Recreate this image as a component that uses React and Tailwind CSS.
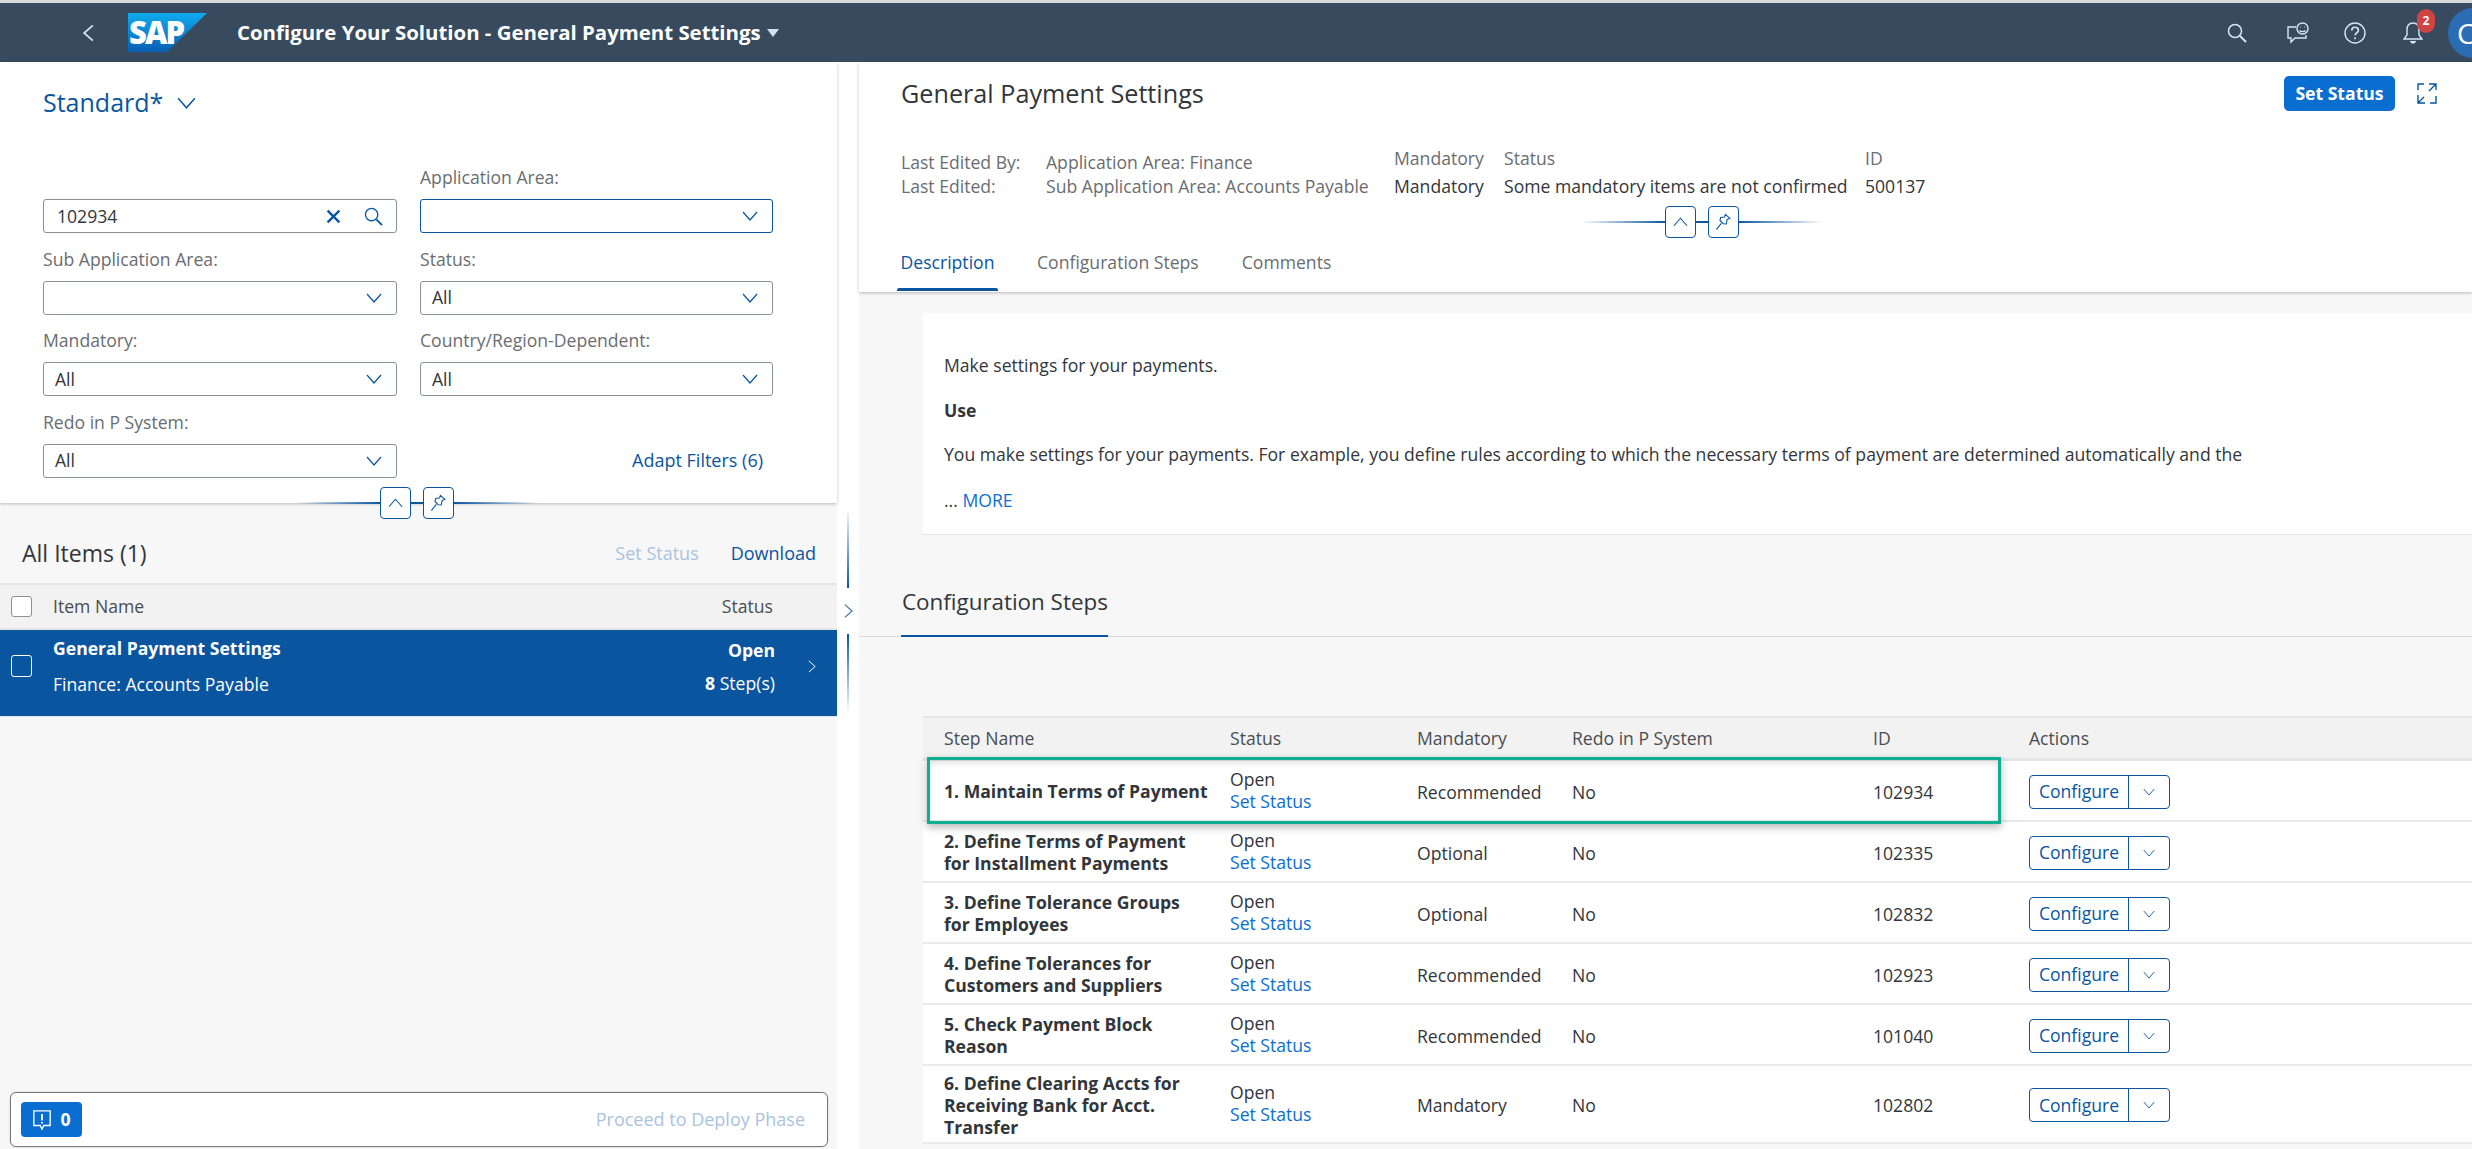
import React from "react";

const Chevron = ({ className = "", dir = "down", w = "1.2" }) => {
  const d = {
    down: "M1 1l7 8 7-8",
    up: "M1 9l7-8 7 8",
    right: "M1 1l8 7-8 7",
    left: "M9 1L1 8l8 7",
  }[dir];
  const vb = dir === "down" || dir === "up" ? "0 0 16 10" : "0 0 10 16";
  return (
    <svg viewBox={vb} fill="none" stroke="currentColor" strokeWidth={w} className={className}>
      <path d={d} />
    </svg>
  );
};

const Pin = () => (
  <svg viewBox="0 0 20 20" fill="none" stroke="#0a55a0" strokeWidth="1.2" className="w-[18px] h-[18px]">
    <path d="M11.5 1.5l5 4.5-3 1.2-1 5-3.4-.3-3.6-3.6.8-3.2 4.3-.6zM7 11.5l-5.5 7" />
  </svg>
);

const CollapsePins = () => (
  <div className="h-[32px] w-[242px] flex items-center justify-center gap-[12px] relative">
    <div className="absolute left-0 right-0 top-[15px] h-[2px] bg-[linear-gradient(to_right,transparent_0%,#0a55a0_35%,#0a55a0_65%,transparent_100%)]" />
    <button className="relative w-[31px] h-[32px] bg-white border border-[#0a55a0] rounded-[4px] flex items-center justify-center text-[#0a55a0]">
      <Chevron dir="up" className="w-[15px] h-[10px]" />
    </button>
    <button className="relative w-[31px] h-[32px] bg-white border border-[#0a55a0] rounded-[4px] flex items-center justify-center">
      <Pin />
    </button>
  </div>
);

const Field = ({ label, value, active }) => (
  <div>
    <div className="h-[24px] leading-[22px] text-[#6a6d70]">{label || "\u00a0"}</div>
    <div
      className={`mt-[9px] h-[34px] rounded-[3px] border flex items-center justify-between pl-[11px] pr-[14px] bg-white ${
        active ? "border-[#0a55a0]" : "border-[#89919a]"
      }`}
    >
      <span className="text-[#32363a]">{value}</span>
      <Chevron className="w-[16px] h-[10px] text-[#0a55a0]" />
    </div>
  </div>
);

const steps = [
  { n: ["1. Maintain Terms of Payment"], m: "Recommended", id: "102934", h: "h-[61px]" },
  { n: ["2. Define Terms of Payment", "for Installment Payments"], m: "Optional", id: "102335", h: "h-[61px]" },
  { n: ["3. Define Tolerance Groups", "for Employees"], m: "Optional", id: "102832", h: "h-[61px]" },
  { n: ["4. Define Tolerances for", "Customers and Suppliers"], m: "Recommended", id: "102923", h: "h-[61px]" },
  { n: ["5. Check Payment Block", "Reason"], m: "Recommended", id: "101040", h: "h-[61px]" },
  { n: ["6. Define Clearing Accts for", "Receiving Bank for Acct.", "Transfer"], m: "Mandatory", id: "102802", h: "h-[78px]" },
];

const cols = "grid grid-cols-[307px_187px_155px_301px_156px_1fr] items-center";

export default function App() {
  return (
    <div className="h-[1149px] w-[2472px] overflow-hidden flex flex-col bg-white font-['Open_Sans',sans-serif] text-[17.6px] text-[#32363a]">
      <div className="h-[3px] bg-[#d9d9d9] shrink-0" />
      {/* Shell bar */}
      <header className="h-[59px] shrink-0 bg-[#384a5e] flex items-center relative">
        <Chevron dir="left" w="1.6" className="w-[11px] h-[24px] ml-[83px] text-[#cfe2f5]" />
        <svg viewBox="0 0 79 39" className="w-[79px] h-[39px] ml-[34px] overflow-visible">
          <defs>
            <linearGradient id="sapg" x1="0" y1="0" x2="0" y2="1">
              <stop offset="0" stopColor="#0fabee" />
              <stop offset="1" stopColor="#0a5fb4" />
            </linearGradient>
          </defs>
          <polygon points="0,0 79,0 39,39 0,39" fill="url(#sapg)" />
          <text x="1" y="31" fill="#fff" fontFamily="'Open Sans',sans-serif" fontWeight="800" fontSize="31" letterSpacing="-2">SAP</text>
        </svg>
        <div className="ml-[30px] text-white font-bold text-[20.4px] leading-none">Configure Your Solution - General Payment Settings</div>
        <span className="ml-[6px] w-0 h-0 border-l-[6px] border-r-[6px] border-t-[8px] border-l-transparent border-r-transparent border-t-[#cfe2f5]" />
        <div className="ml-auto flex items-center text-[#d5e6f7]">
          <svg viewBox="0 0 20 20" fill="none" stroke="currentColor" strokeWidth="1.5" className="w-[20px] h-[20px]">
            <circle cx="8" cy="8" r="6.5" />
            <path d="M13 13l6 6" strokeWidth="2" />
          </svg>
          <svg viewBox="0 0 24 22" fill="none" stroke="currentColor" strokeWidth="1.4" className="w-[24px] h-[22px] ml-[39px]">
            <path d="M10 5H2v11h3v4l4-4h11v-3" />
            <circle cx="16.5" cy="6.5" r="5.5" />
            <path d="M13.5 8.5c1.5 1.5 4.5 1.5 6 0M14.5 5h.5M18 5h.5" />
          </svg>
          <svg viewBox="0 0 22 22" fill="none" stroke="currentColor" strokeWidth="1.4" className="w-[22px] h-[22px] ml-[34px]">
            <circle cx="11" cy="11" r="10" />
            <path d="M7.8 8.5c0-4.3 6.6-4.3 6.6-.2 0 2.6-3.3 2.5-3.3 5" strokeWidth="1.7" />
            <circle cx="11" cy="16.3" r="1" fill="currentColor" stroke="none" />
          </svg>
          <div className="relative ml-[37px] w-[20px] h-[24px]">
            <svg viewBox="0 0 20 24" fill="none" stroke="currentColor" strokeWidth="1.4" className="w-[20px] h-[24px]">
              <path d="M10 2c-4 0-6 3-6 7v5l-3 4h18l-3-4V9c0-4-2-7-6-7z" />
              <path d="M7.5 20c1 2.6 4 2.6 5 0" fill="currentColor" />
            </svg>
            <span className="absolute -top-[12px] left-[14px] w-[18px] h-[24px] rounded-full bg-[#d04343] text-white text-[12px] font-bold flex items-center justify-center">2</span>
          </div>
          <div className="ml-[25px] -mr-[26px] w-[50px] h-[50px] rounded-full bg-[#2a6db5] text-white text-[28px] flex items-center pl-[9px]">C</div>
        </div>
      </header>

      <div className="flex flex-1 min-h-0">
        {/* Left panel */}
        <aside className="w-[837px] shrink-0 flex flex-col bg-[#f7f7f7]">
          <div className="h-[441px] shrink-0 bg-white relative shadow-[0_1px_3px_rgba(0,0,0,0.25)] pl-[43px]">
            <div className="mt-[24px] h-[34px] flex items-center gap-[13px] text-[#0a55a0] text-[25px]">
              <span>Standard*</span>
              <Chevron className="w-[21px] h-[12px]" />
            </div>
            <div className="mt-[46px] grid grid-cols-[354px_353px] gap-x-[23px] gap-y-[14.5px]">
              <div>
                <div className="h-[24px]" />
                <div className="mt-[9px] h-[34px] rounded-[3px] border border-[#89919a] flex items-center pl-[13px] pr-[13px]">
                  <span className="flex-1">102934</span>
                  <svg viewBox="0 0 14 14" stroke="#0a55a0" strokeWidth="2.2" className="w-[15px] h-[15px]">
                    <path d="M1.5 1.5l11 11M12.5 1.5l-11 11" />
                  </svg>
                  <svg viewBox="0 0 20 20" fill="none" stroke="#0a55a0" strokeWidth="1.4" className="w-[19px] h-[19px] ml-[23px]">
                    <circle cx="8" cy="8" r="6.5" />
                    <path d="M13 13l6 6" strokeWidth="2" />
                  </svg>
                </div>
              </div>
              <Field label="Application Area:" value="" active />
              <Field label="Sub Application Area:" value="" />
              <Field label="Status:" value="All" />
              <Field label="Mandatory:" value="All" />
              <Field label="Country/Region-Dependent:" value="All" />
              <Field label="Redo in P System:" value="All" />
              <div className="flex items-end justify-end pr-[10px] h-[67px]">
                <span className="text-[#0a55a0] text-[18px] h-[34px] leading-[32px]">Adapt Filters (6)</span>
              </div>
            </div>
            <div className="absolute left-[296px] -bottom-[16px]">
              <CollapsePins />
            </div>
          </div>

          <div className="h-[80px] shrink-0 pt-[20px] pl-[22px] pr-[21px] flex items-center justify-between">
            <span className="text-[23px]">All Items (1)</span>
            <div className="flex gap-[32px] text-[18px]">
              <span className="text-[#a9c3df]">Set Status</span>
              <span className="text-[#0a55a0]">Download</span>
            </div>
          </div>
          <div className="h-[47px] shrink-0 border-t-2 border-b-2 border-[#e5e5e5] bg-[#f2f2f2] flex items-center pl-[11px] pr-[64px] text-[#4a4d50]">
            <span className="w-[21px] h-[21px] rounded-[3px] border border-[#89919a] bg-white" />
            <span className="ml-[21px] flex-1">Item Name</span>
            <span>Status</span>
          </div>
          <div className="h-[87px] shrink-0 bg-[#0a55a0] text-white flex items-center pl-[11px] pr-[21px] pb-[14px] border-b border-b-[#dfe7f0]">
            <span className="w-[21px] h-[22px] rounded-[3px] border border-white" />
            <div className="ml-[21px] flex-1">
              <div className="font-bold leading-[24px]">General Payment Settings</div>
              <div className="leading-[24px] mt-[12px]">Finance: Accounts Payable</div>
            </div>
            <div className="text-right">
              <div className="font-bold leading-[24px]">Open</div>
              <div className="leading-[24px] mt-[9px]"><b>8</b> Step(s)</div>
            </div>
            <Chevron dir="right" className="w-[8px] h-[15px] ml-[33px]" />
          </div>

          <div className="mt-auto ml-[10px] mr-[9px] mb-[2px] h-[55px] shrink-0 bg-white border border-[#777] rounded-[6px] flex items-center justify-between pl-[10px] pr-[22px] shadow-[0_0_2px_rgba(0,0,0,0.2)]">
            <div className="w-[61px] h-[35px] rounded-[4px] bg-[#0a6ed1] text-white font-bold flex items-center justify-center gap-[8px]">
              <svg viewBox="0 0 22 24" fill="none" stroke="#fff" strokeWidth="1.5" className="w-[20px] h-[22px]">
                <path d="M2 2h18v16h-7l-2 4-2-4H2z" />
                <path d="M11 5.5v7M11 14.2v1.6" strokeWidth="2" />
              </svg>
              <span>0</span>
            </div>
            <span className="text-[#a9c3df] text-[18px]">Proceed to Deploy Phase</span>
          </div>
        </aside>

        {/* Splitter */}
        <div className="w-[22px] shrink-0 bg-white flex flex-col items-center pt-[446px] text-[#0a55a0]">
          <div className="w-[2px] h-[80px] bg-gradient-to-b from-transparent to-[#0a55a0]" />
          <Chevron dir="right" className="w-[9px] h-[16px] my-[15px] text-[#2b70b5]" />
          <div className="w-[2px] h-[79px] bg-gradient-to-b from-[#0a55a0] to-transparent" />
        </div>

        {/* Right panel */}
        <main className="flex-1 min-w-0 bg-[#f7f7f7] flex flex-col">
          <div className="h-[230px] shrink-0 bg-white shadow-[0_1px_3px_rgba(0,0,0,0.25)] relative flex flex-col">
            <div className="pt-[14px] pl-[42px] pr-[35px] flex items-center justify-between">
              <span className="text-[25.2px] leading-[35px]">General Payment Settings</span>
              <div className="flex items-center gap-[22px]">
                <button className="w-[111px] h-[35px] rounded-[5px] bg-[#0a6ed1] text-white font-bold flex items-center justify-center">Set Status</button>
                <svg viewBox="0 0 20 21" fill="none" stroke="#0a55a0" strokeWidth="1.4" className="w-[20px] h-[21px]">
                  <path d="M1 12v8h7M1 7V1h6M12 1h7v6M19 13v7h-6M19 1l-7 7M1 20l6-6" />
                </svg>
              </div>
            </div>
            <div className="mt-[35px] pl-[42px] grid grid-cols-[145px_348px_110px_361px_auto] items-end leading-[24px]">
              <div className="text-[#6a6d70]"><div>Last Edited By:</div><div>Last Edited:</div></div>
              <div className="text-[#6a6d70]"><div>Application Area: Finance</div><div>Sub Application Area: Accounts Payable</div></div>
              <div><div className="text-[#6a6d70] mb-[4px]">Mandatory</div><div>Mandatory</div></div>
              <div><div className="text-[#6a6d70] mb-[4px]">Status</div><div>Some mandatory items are not confirmed</div></div>
              <div><div className="text-[#6a6d70] mb-[4px]">ID</div><div>500137</div></div>
            </div>
            <div className="mt-[8px] ml-[722px]"><CollapsePins /></div>
            <div className="mt-auto pl-[38px] flex h-[55px] text-[#6a6d70]">
              <div className="w-[101px] flex flex-col items-center justify-between pt-[12px] text-[#0a55a0]">
                <span className="leading-[24px]">Description</span>
                <span className="w-full h-[3px] bg-[#0a55a0] rounded-t-[2px] mb-[1px]" />
              </div>
              <span className="ml-[39px] pt-[12px] leading-[24px]">Configuration Steps</span>
              <span className="ml-[43px] pt-[12px] leading-[24px]">Comments</span>
            </div>
          </div>

          <div className="mt-[21px] ml-[64px] h-[222px] shrink-0 bg-white border-b border-[#e5e5e5] pl-[21px] flex flex-col">
            <div className="mt-[40px] leading-[24px]">Make settings for your payments.</div>
            <div className="mt-[21px] leading-[24px] font-bold">Use</div>
            <div className="mt-[20px] leading-[24px]">You make settings for your payments. For example, you define rules according to which the necessary terms of payment are determined automatically and the</div>
            <div className="mt-[22px] leading-[24px]">... <span className="text-[#0a6ed1]">MORE</span></div>
          </div>

          <div className="mt-[50px] h-[52px] shrink-0 border-b border-[#d9d9d9] pl-[43px] relative">
            <span className="text-[22.4px] leading-[34px]">Configuration Steps</span>
            <span className="absolute left-[42px] -bottom-px w-[207px] h-[2px] bg-[#0a55a0]" />
          </div>

          <div className="mt-[79px] ml-[64px] shrink-0">
            <div className={`${cols} h-[45px] bg-[#f2f2f2] border-t-2 border-b-[3px] border-[#e5e5e5] text-[#4a4d50]`}>
              <span className="pl-[21px]">Step Name</span>
              <span>Status</span>
              <span>Mandatory</span>
              <span>Redo in P System</span>
              <span>ID</span>
              <span>Actions</span>
            </div>
            {steps.map((s, i) => (
              <div key={s.id} className={`${cols} ${s.h} relative bg-white border-b-2 border-[#e9e9e9]`}>
                {i === 0 && (
                  <div className="absolute z-10 left-[4px] -top-[4px] -bottom-[4px] w-[1074px] border-[3px] border-[#0fae90] shadow-[0_3px_8px_rgba(0,0,0,0.3),inset_0_3px_6px_rgba(0,0,0,0.12)] pointer-events-none" />
                )}
                <div className="pl-[21px] font-bold leading-[22px] relative pt-[1px]">
                  {s.n.map((l) => (<div key={l}>{l}</div>))}
                </div>
                <div className="leading-[22px] relative -mt-[2px]">
                  <div>Open</div>
                  <div className="text-[#0a6ed1]">Set Status</div>
                </div>
                <span className="relative pt-[3px]">{s.m}</span>
                <span className="relative pt-[3px]">No</span>
                <span className="relative pt-[3px]">{s.id}</span>
                <div className="relative mt-[2px] w-[141px] h-[34px] flex border border-[#0a55a0] rounded-[4px] bg-white text-[#0a55a0]">
                  <span className="w-[99px] border-r border-[#0a55a0] flex items-center justify-center">Configure</span>
                  <span className="flex-1 flex items-center justify-center">
                    <Chevron className="w-[12px] h-[8px]" />
                  </span>
                </div>
              </div>
            ))}
          </div>
        </main>
      </div>
    </div>
  );
}
